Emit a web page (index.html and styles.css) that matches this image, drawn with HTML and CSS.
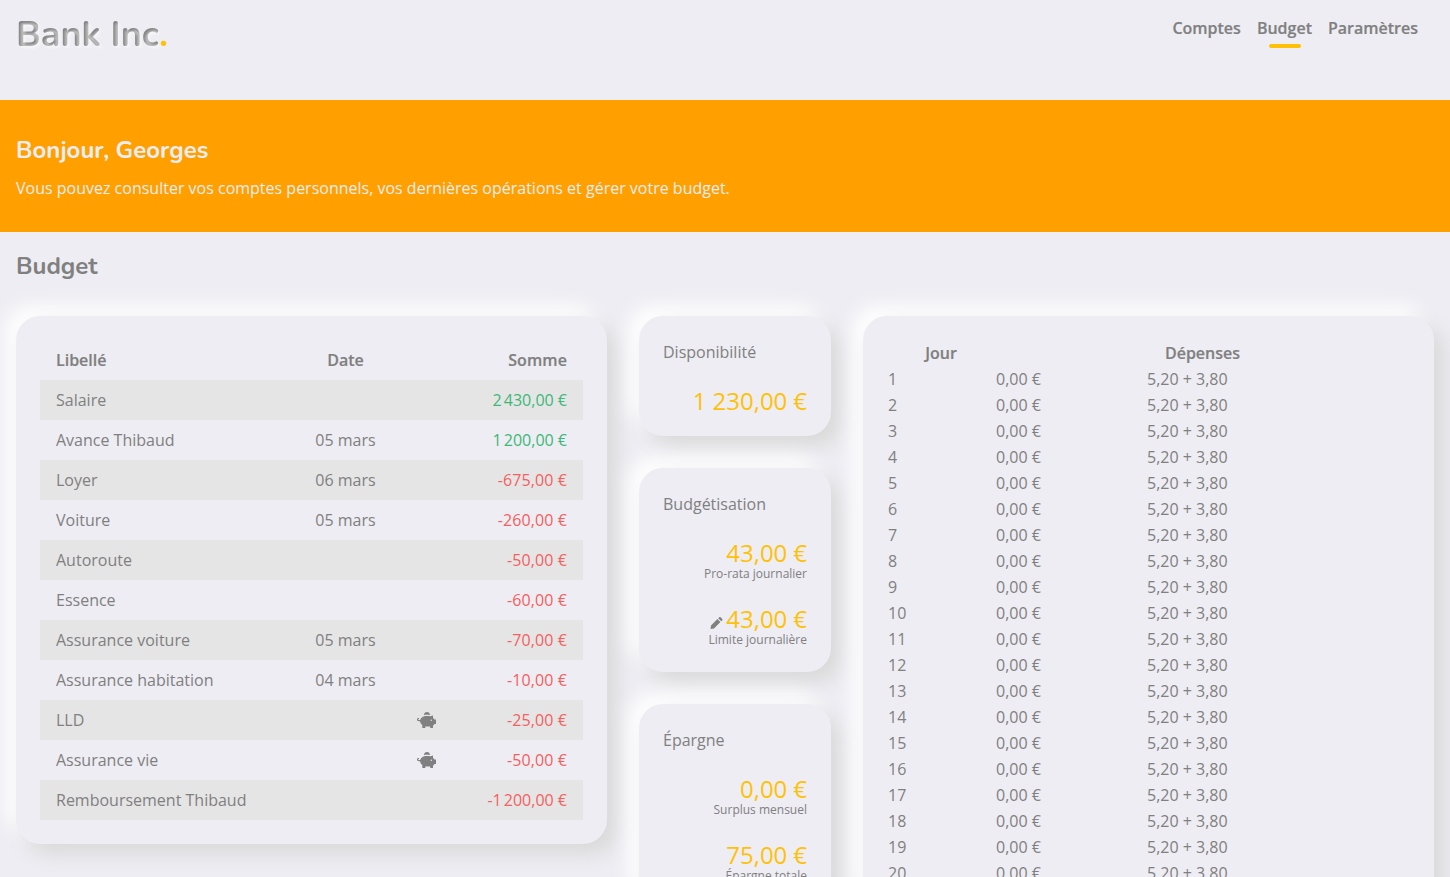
FILE: index.html
```html
<!DOCTYPE html>
<html lang="fr">
<head>
<meta charset="utf-8">
<title>Bank Inc.</title>
<link rel="stylesheet" href="styles.css">
</head>
<body>
<svg class="sprite" width="0" height="0" aria-hidden="true">
  <symbol id="pig" viewBox="0 0 19 16">
    <path d="M6.800 3C7.200 1.200 8.300.1 10 .1s2.800 1.100 3.200 2.900C11 2.600 9 2.600 6.800 3z"/>
    <path fill-rule="evenodd" d="M7 4.200c2-.4 4.500-.4 6.500 0L16 3.400v2.400c.6.500.9 1 1.200 1.600H19v4.600h-1.500c-.4.700-.9 1.200-1.500 1.600V16h-2.800v-1.500H8.300V16H5.300v-2.900C3.900 12 3.200 10.700 3.100 9.200H2C.8 9.200 0 8.600 0 7.500S.8 5.900 2 6v.9c-.6 0-.9.200-.9.600s.3.600.9.600h1.200C3.700 6.200 5 4.900 7 4.200zM14.300 7.600a.7.700 0 1 0 .01 1.400.7.700 0 0 0-.01-1.400z"/>
  </symbol>
  <symbol id="pencil" viewBox="0 0 12 12">
    <path d="M0 12l.5-3.500L6.900 2.100l3 3-6.400 6.400zM7.700 1.300L8.600.4c.5-.5 1.100-.5 1.600 0l1.400 1.400c.5.500.5 1.100 0 1.600l-.9.900z"/>
  </symbol>
</svg>
<header class="topbar">
  <a class="brand"><span class="brand-name">Bank Inc</span><span class="brand-dot">.</span></a>
  <nav class="menu"><a>Comptes</a><a class="active">Budget</a><a>Paramètres</a></nav>
</header>
<section class="banner">
  <h2>Bonjour, Georges</h2>
  <p>Vous pouvez consulter vos comptes personnels, vos dernières opérations et gérer votre budget.</p>
</section>
<main class="content">
  <h2>Budget</h2>
  <div class="columns">
    <section class="card">
      <table class="operations">
        <colgroup><col class="c-label"><col class="c-date"><col class="c-icon"><col></colgroup>
        <thead><tr><th>Libellé</th><th class="date">Date</th><th></th><th class="sum">Somme</th></tr></thead>
        <tbody>
          <tr><td>Salaire</td><td></td><td></td><td class="sum plus">2&#8239;430,00 €</td></tr>
          <tr><td>Avance Thibaud</td><td class="date">05 mars</td><td></td><td class="sum plus">1&#8239;200,00 €</td></tr>
          <tr><td>Loyer</td><td class="date">06 mars</td><td></td><td class="sum minus">-675,00 €</td></tr>
          <tr><td>Voiture</td><td class="date">05 mars</td><td></td><td class="sum minus">-260,00 €</td></tr>
          <tr><td>Autoroute</td><td></td><td></td><td class="sum minus">-50,00 €</td></tr>
          <tr><td>Essence</td><td></td><td></td><td class="sum minus">-60,00 €</td></tr>
          <tr><td>Assurance voiture</td><td class="date">05 mars</td><td></td><td class="sum minus">-70,00 €</td></tr>
          <tr><td>Assurance habitation</td><td class="date">04 mars</td><td></td><td class="sum minus">-10,00 €</td></tr>
          <tr><td>LLD</td><td></td><td class="icon"><svg class="pig"><use href="#pig"/></svg></td><td class="sum minus">-25,00 €</td></tr>
          <tr><td>Assurance vie</td><td></td><td class="icon"><svg class="pig"><use href="#pig"/></svg></td><td class="sum minus">-50,00 €</td></tr>
          <tr><td>Remboursement Thibaud</td><td></td><td></td><td class="sum minus">-1&#8239;200,00 €</td></tr>
        </tbody>
      </table>
    </section>
    <div class="stack">
      <section class="card">
        <h3>Disponibilité</h3>
        <div class="figure"><strong>1 230,00 €</strong></div>
      </section>
      <section class="card">
        <h3>Budgétisation</h3>
        <div class="figure"><strong>43,00 €</strong><small>Pro-rata journalier</small></div>
        <div class="figure"><strong><svg class="pencil"><use href="#pencil"/></svg>43,00 €</strong><small>Limite journalière</small></div>
      </section>
      <section class="card">
        <h3>Épargne</h3>
        <div class="figure"><strong>0,00 €</strong><small>Surplus mensuel</small></div>
        <div class="figure"><strong>75,00 €</strong><small>Épargne totale</small></div>
      </section>
    </div>
    <section class="card">
      <table class="days">
        <colgroup><col class="d-day"><col class="d-total"><col class="d-spent"><col></colgroup>
        <thead><tr><th>Jour</th><th></th><th>Dépenses</th><th></th></tr></thead>
        <tbody id="days"></tbody>
      </table>
    </section>
  </div>
</main>
<script src="days.js"></script>
</body>
</html>
```
FILE: styles.css
```css
* { box-sizing: border-box; }
body {
  margin: 0;
  height: 877px;
  overflow: hidden;
  background: #eeedf3;
  color: #808080;
  font: 16px/24px "Open Sans", "Noto Sans", sans-serif;
}
.sprite { display: block; }
h2, h3, p { margin: 0; }
h2 { font: 700 24px/36px Nunito, Lato, sans-serif; }
svg { fill: #808080; }

.topbar {
  display: flex;
  justify-content: space-between;
  height: 100px;
  padding: 16px 32px 0 16px;
}
.brand {
  padding-top: 1px;
  font: 700 36px/36px Nunito, Lato, sans-serif;
}
.brand-name {
  background: #808080;
  background-clip: text;
  -webkit-background-clip: text;
  color: transparent;
  text-shadow: 2px 2px 3px rgba(255, 255, 255, .5);
}
.brand-dot { color: #ffc107; }
.menu { display: flex; gap: 16px; }
.menu a { height: 32px; }
.menu a, th { font-weight: 600; -webkit-text-stroke: .2px #808080; }
.menu .active::after {
  content: "";
  display: block;
  width: 32px;
  height: 4px;
  margin: 4px 0 0 12px;
  border-radius: 2px;
  background: #ffc107;
}

.banner {
  height: 132px;
  padding: 32px 16px;
  background: #ffa000;
  color: #eeedf3;
}
.banner p { margin-top: 8px; }

.content { padding: 16px; }
.columns {
  display: grid;
  grid-template-columns: 591px 192px 571px;
  gap: 32px;
  align-items: start;
  margin-top: 32px;
}
.stack { display: grid; gap: 32px; }
.card {
  padding: 24px;
  border-radius: 24px;
  background: #eeedf3;
  box-shadow: 10px 10px 20px #d9d9d9, -10px -10px 20px #ffffff;
}

table { width: 100%; table-layout: fixed; border-collapse: collapse; }
.operations th, .operations td { height: 40px; padding: 8px 16px; text-align: left; white-space: nowrap; }
.operations tbody tr:nth-child(odd) { background: #e5e5e5; }
.c-label { width: 259px; }
.c-date { width: 93px; }
.c-icon { width: 69px; }
.operations .date { padding: 8px 0; text-align: center; }
.operations .icon { padding: 8px 0; text-align: center; }
.operations .sum { text-align: right; letter-spacing: .1px; }
.plus { color: #3cb878; }
.minus { color: #f55f5f; }
.pig { display: block; width: 19px; height: 16px; margin: 0 auto; }

h3 { font-size: 16px; font-weight: 400; line-height: 24px; }
.figure { margin-top: 25px; margin-bottom: -1px; text-align: right; }
.figure strong { display: block; color: #ffc107; font-size: 24px; font-weight: 400; line-height: 24px; word-spacing: -.3px; }
.figure small { display: block; font-size: 12px; line-height: 18px; }
.pencil { width: 13px; height: 12px; margin-right: 3px; vertical-align: -1px; }

.days th, .days td { height: 26px; padding: 1px; }
.d-day { width: 108px; }
.d-total { width: 151px; }
.d-spent { width: 113px; }
```
FILE: days.js
```js
const body = document.getElementById("days");
for (let day = 1; day <= 20; day++) {
  const row = body.insertRow();
  for (const text of [day, "0,00 €", "5,20 + 3,80", ""]) {
    row.insertCell().textContent = text;
  }
}
```
